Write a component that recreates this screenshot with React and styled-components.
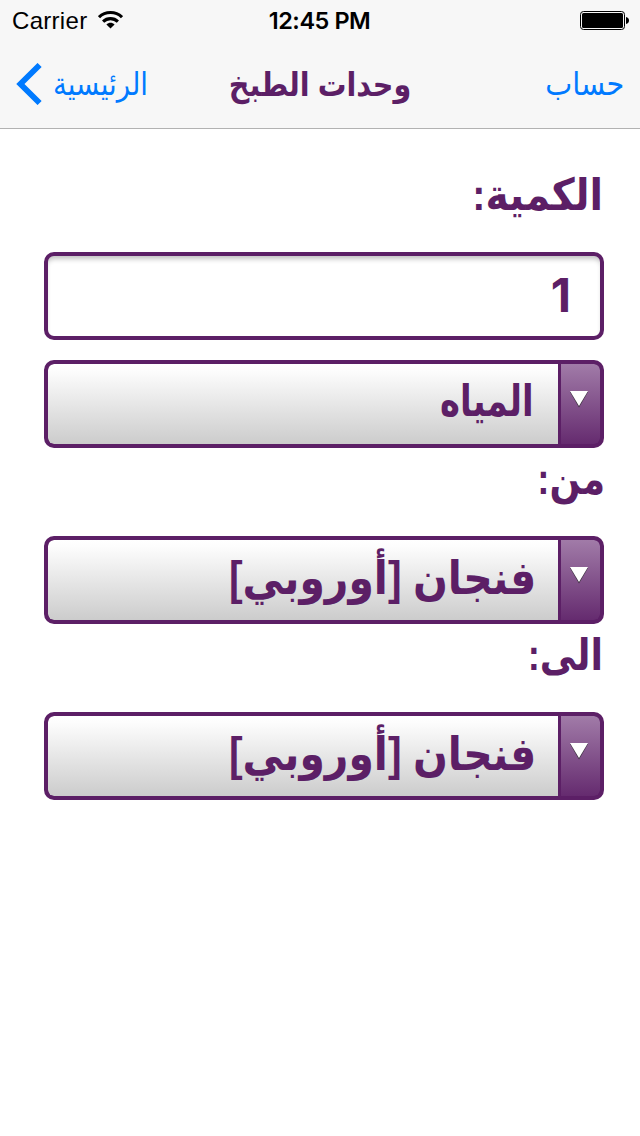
import React from 'react';
import styled, { createGlobalStyle } from 'styled-components';

const GlobalStyle = createGlobalStyle`
  :root {
    --purple: #5c1f66;
    --blue: #007aff;
    --bar: #f7f7f7;
  }
  * {
    box-sizing: border-box;
  }
  body {
    margin: 0;
    background-color: #fff;
    font-family: 'Liberation Sans', 'DejaVu Sans', sans-serif;
  }
`;

const ScreenStyle = styled.div`
  width: 640px;
  height: 1136px;
  overflow: hidden;
  background-color: #fff;
`;

const StatusBarStyle = styled.div`
  display: grid;
  grid-template-columns: 1fr auto 1fr;
  align-items: center;
  height: 40px;
  padding: 0 11px 0 12px;
  background-color: var(--bar);
  font-size: 24px;
  line-height: 42px;
  .statusBar__carrier {
    display: flex;
    align-items: center;
    gap: 11px;
    letter-spacing: 0.3px;
  }
  .statusBar__carrier svg {
    margin-top: -2px;
  }
  .statusBar__time {
    font-family: 'Inter', 'Liberation Sans', sans-serif;
    font-weight: 600;
    font-size: 23.5px;
    letter-spacing: -0.45px;
    margin-left: -2px;
  }
  .statusBar__battery {
    justify-self: end;
    display: block;
    margin-top: -2px;
  }
`;

const NavBarStyle = styled.div`
  display: grid;
  grid-template-columns: 1fr auto 1fr;
  align-items: center;
  height: 89px;
  padding: 0 16px;
  background-color: var(--bar);
  border-bottom: 1px solid #b2b2b2;
  .navBar__back {
    display: flex;
    align-items: center;
    gap: 11px;
    color: var(--blue);
  }
  .navBar__title {
    margin: 0;
    color: var(--purple);
  }
  .navBar__action {
    justify-self: end;
    color: var(--blue);
  }
`;

const ArabicText = styled.span`
  display: block;
  direction: rtl;
  white-space: nowrap;
  line-height: 1;
  font-size: ${({ $size }) => $size}px;
  font-weight: ${({ $bold }) => ($bold ? 'bold' : 'normal')};
  transform: scaleX(${({ $stretch = 1 }) => $stretch});
  transform-origin: ${({ $origin = 'right' }) => $origin} center;
`;

const FormStyle = styled.main`
  padding: 35px 36px 0 44px;
  color: var(--purple);
`;

const Label = styled.div`
  direction: rtl;
  height: 88px;
  margin-right: -1px;
  padding: 9px ${({ $inset = 0 }) => $inset}px 0 0;
`;

const Field = styled.div`
  direction: rtl;
  height: 88px;
  margin-bottom: 20px;
  padding-right: 29px;
  border: 4px solid var(--purple);
  border-radius: 10px;
  box-shadow: inset 0 5px 5px -2px rgba(0, 0, 0, 0.24);
  font-family: 'Inter', 'Liberation Sans', sans-serif;
  font-size: 47px;
  font-weight: bold;
  line-height: 78px;
`;

const SelectStyle = styled.div`
  display: flex;
  height: 88px;
  border: 4px solid var(--purple);
  border-radius: 10px;
  background-color: var(--purple);
  overflow: hidden;
  .select__value {
    flex: 1;
    display: flex;
    justify-content: flex-end;
    padding: 15px ${({ $inset }) => $inset}px 0 0;
    border-radius: 6px 0 0 6px;
    background: linear-gradient(#fff 0%, #fdfdfd 8%, #ccc 100%);
  }
  .select__button {
    width: 42px;
    padding: 26px 0 0 8px;
    border-left: 3px solid var(--purple);
    border-radius: 0 6px 6px 0;
    background: linear-gradient(#a17ba8, #652b6f);
  }
  svg {
    display: block;
  }
`;

function WifiIcon() {
  return (
    <svg width="25" height="18" viewBox="0 0 25 18" fill="none" stroke="#000" strokeWidth="3.1">
      <path d="M1 6.2C7.4 0 17.6 0 24 6.2" />
      <path d="M5.1 10.6C9.2 6.6 15.8 6.6 19.9 10.6" />
      <path d="M12.5 17.6L8.4 13.5C10.8 11.2 14.2 11.2 16.6 13.5Z" fill="#000" stroke="none" />
    </svg>
  );
}

function BatteryIcon() {
  return (
    <svg className="statusBar__battery" width="49" height="19" viewBox="0 0 49 19">
      <rect x="0.5" y="0.5" width="44" height="18" rx="3" fill="none" stroke="#000" />
      <rect x="2" y="2" width="41" height="15" rx="1.5" />
      <path d="M46 6C48 6.4 49 7.8 49 9.5S48 12.6 46 13Z" />
    </svg>
  );
}

function BackIcon() {
  return (
    <svg width="26" height="42" viewBox="0 0 26 42" fill="none" stroke="#007aff" strokeWidth="5.8">
      <path d="M23.6 2L4.4 21L23.6 40" />
    </svg>
  );
}

function ArrowIcon() {
  return (
    <svg width="20" height="18" viewBox="0 0 20 18">
      <path d="M1 2H19L10 17.5Z" fill="#3d3340" />
      <path d="M1 1H19L10 16Z" fill="#fff" />
    </svg>
  );
}

function Select({ value, inset = 22, size = 46, stretch = 0.89 }) {
  return (
    <SelectStyle $inset={inset}>
      <div className="select__value">
        <ArabicText $size={size} $stretch={stretch} $bold>
          {value}
        </ArabicText>
      </div>
      <div className="select__button">
        <ArrowIcon />
      </div>
    </SelectStyle>
  );
}

export default function App() {
  return (
    <ScreenStyle>
      <GlobalStyle />
      <StatusBarStyle>
        <div className="statusBar__carrier">
          Carrier
          <WifiIcon />
        </div>
        <div className="statusBar__time">12:45 PM</div>
        <BatteryIcon />
      </StatusBarStyle>
      <NavBarStyle>
        <div className="navBar__back">
          <BackIcon />
          <ArabicText $size={32} $stretch={0.862} $origin="left">
            الرئيسية
          </ArabicText>
        </div>
        <ArabicText as="h1" className="navBar__title" $size={33} $stretch={0.868} $origin="center" $bold>
          وحدات الطبخ
        </ArabicText>
        <ArabicText className="navBar__action" $size={32} $stretch={0.896}>
          حساب
        </ArabicText>
      </NavBarStyle>
      <FormStyle>
        <Label $inset={2}>
          <ArabicText $size={44} $stretch={0.895} $bold>
            الكمية:
          </ArabicText>
        </Label>
        <Field>1</Field>
        <Select value="المياه" inset={24} size={44} stretch={0.77} />
        <Label>
          <ArabicText $size={44} $stretch={0.83} $bold>
            من:
          </ArabicText>
        </Label>
        <Select value="فنجان [أوروبي]" />
        <Label $inset={2}>
          <ArabicText $size={44} $stretch={0.83} $bold>
            الى:
          </ArabicText>
        </Label>
        <Select value="فنجان [أوروبي]" />
      </FormStyle>
    </ScreenStyle>
  );
}
